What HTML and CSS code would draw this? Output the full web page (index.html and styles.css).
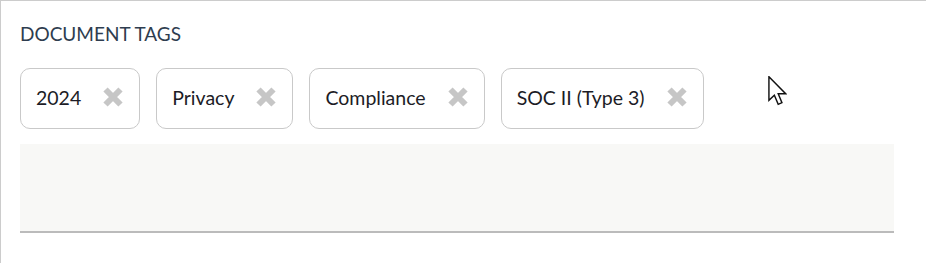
FILE: index.html
```html
<!DOCTYPE html>
<html lang="en">
<head>
    <meta charset="utf-8">
    <title>Document Tags</title>
    <link rel="stylesheet" href="styles.css">
</head>
<body>
    <main class="tags-panel">
        <h2 class="tags-title">Document Tags</h2>

        <ul class="tag-list">
            <li class="tag-chip">
                <span class="tag-label">2024</span>
                <button class="tag-remove" aria-label="Remove 2024">
                    <svg viewBox="0 0 20 20"><path d="M2.5 2.5 17.5 17.5M17.5 2.5 2.5 17.5"/></svg>
                </button>
            </li>
            <li class="tag-chip">
                <span class="tag-label">Privacy</span>
                <button class="tag-remove" aria-label="Remove Privacy">
                    <svg viewBox="0 0 20 20"><path d="M2.5 2.5 17.5 17.5M17.5 2.5 2.5 17.5"/></svg>
                </button>
            </li>
            <li class="tag-chip">
                <span class="tag-label">Compliance</span>
                <button class="tag-remove" aria-label="Remove Compliance">
                    <svg viewBox="0 0 20 20"><path d="M2.5 2.5 17.5 17.5M17.5 2.5 2.5 17.5"/></svg>
                </button>
            </li>
            <li class="tag-chip">
                <span class="tag-label">SOC II (Type 3)</span>
                <button class="tag-remove" aria-label="Remove SOC II (Type 3)">
                    <svg viewBox="0 0 20 20"><path d="M2.5 2.5 17.5 17.5M17.5 2.5 2.5 17.5"/></svg>
                </button>
            </li>
        </ul>

        <div class="tag-input" contenteditable="true"></div>

        <!-- mouse pointer captured in the shot -->
        <svg class="pointer" viewBox="0 0 13 21">
            <path d="M0.5 0.5V17L4.3 13.4 7 19.8 9.6 18.7 7 12.4H12.2Z"/>
        </svg>
    </main>
</body>
</html>
```

FILE: styles.css
```css
:root {
    --line: #cccccc;
    --chip-border: #c9c9c9;
    --icon: #c6c6c6;
    --title: #2e3d4f;
    --text: #1c1c26;
    --field: #f8f8f6;
}

* {
    margin: 0;
    padding: 0;
    box-sizing: border-box;
}

body {
    font-family: Lato, Roboto, sans-serif;
    background: white;
    color: var(--text);
}

.tags-panel {
    position: relative;
    min-height: 263px;
    border-top: 1px solid var(--line);
    border-left: 1px solid var(--line);
    padding: 21px 32px 0 19px;
}

.tags-title {
    font-size: 19px;
    font-weight: 400;
    line-height: 24px;
    text-transform: uppercase;
    color: var(--title);
    margin-bottom: 22px;
}

.tag-list {
    list-style: none;
    display: flex;
    gap: 16px;
    margin-bottom: 15px;
}

.tag-chip {
    display: flex;
    align-items: center;
    gap: 22px;
    height: 61px;
    padding: 0 16px 3px 15px;
    border: 1px solid var(--chip-border);
    border-radius: 10px;
    font-size: 19.5px;
}

.tag-remove {
    display: flex;
    border: none;
    background: none;
    cursor: pointer;
}

.tag-remove svg {
    width: 20px;
    height: 20px;
    stroke: var(--icon);
    stroke-width: 6;
    fill: none;
}

.tag-input {
    height: 89px;
    background: var(--field);
    border-bottom: 2px solid #bbbbbb;
}

.pointer {
    position: absolute;
    left: 767px;
    top: 75px;
    width: 19px;
    height: 30px;
    fill: white;
    stroke: #111;
    stroke-width: 1;
    stroke-linejoin: miter;
}
```
